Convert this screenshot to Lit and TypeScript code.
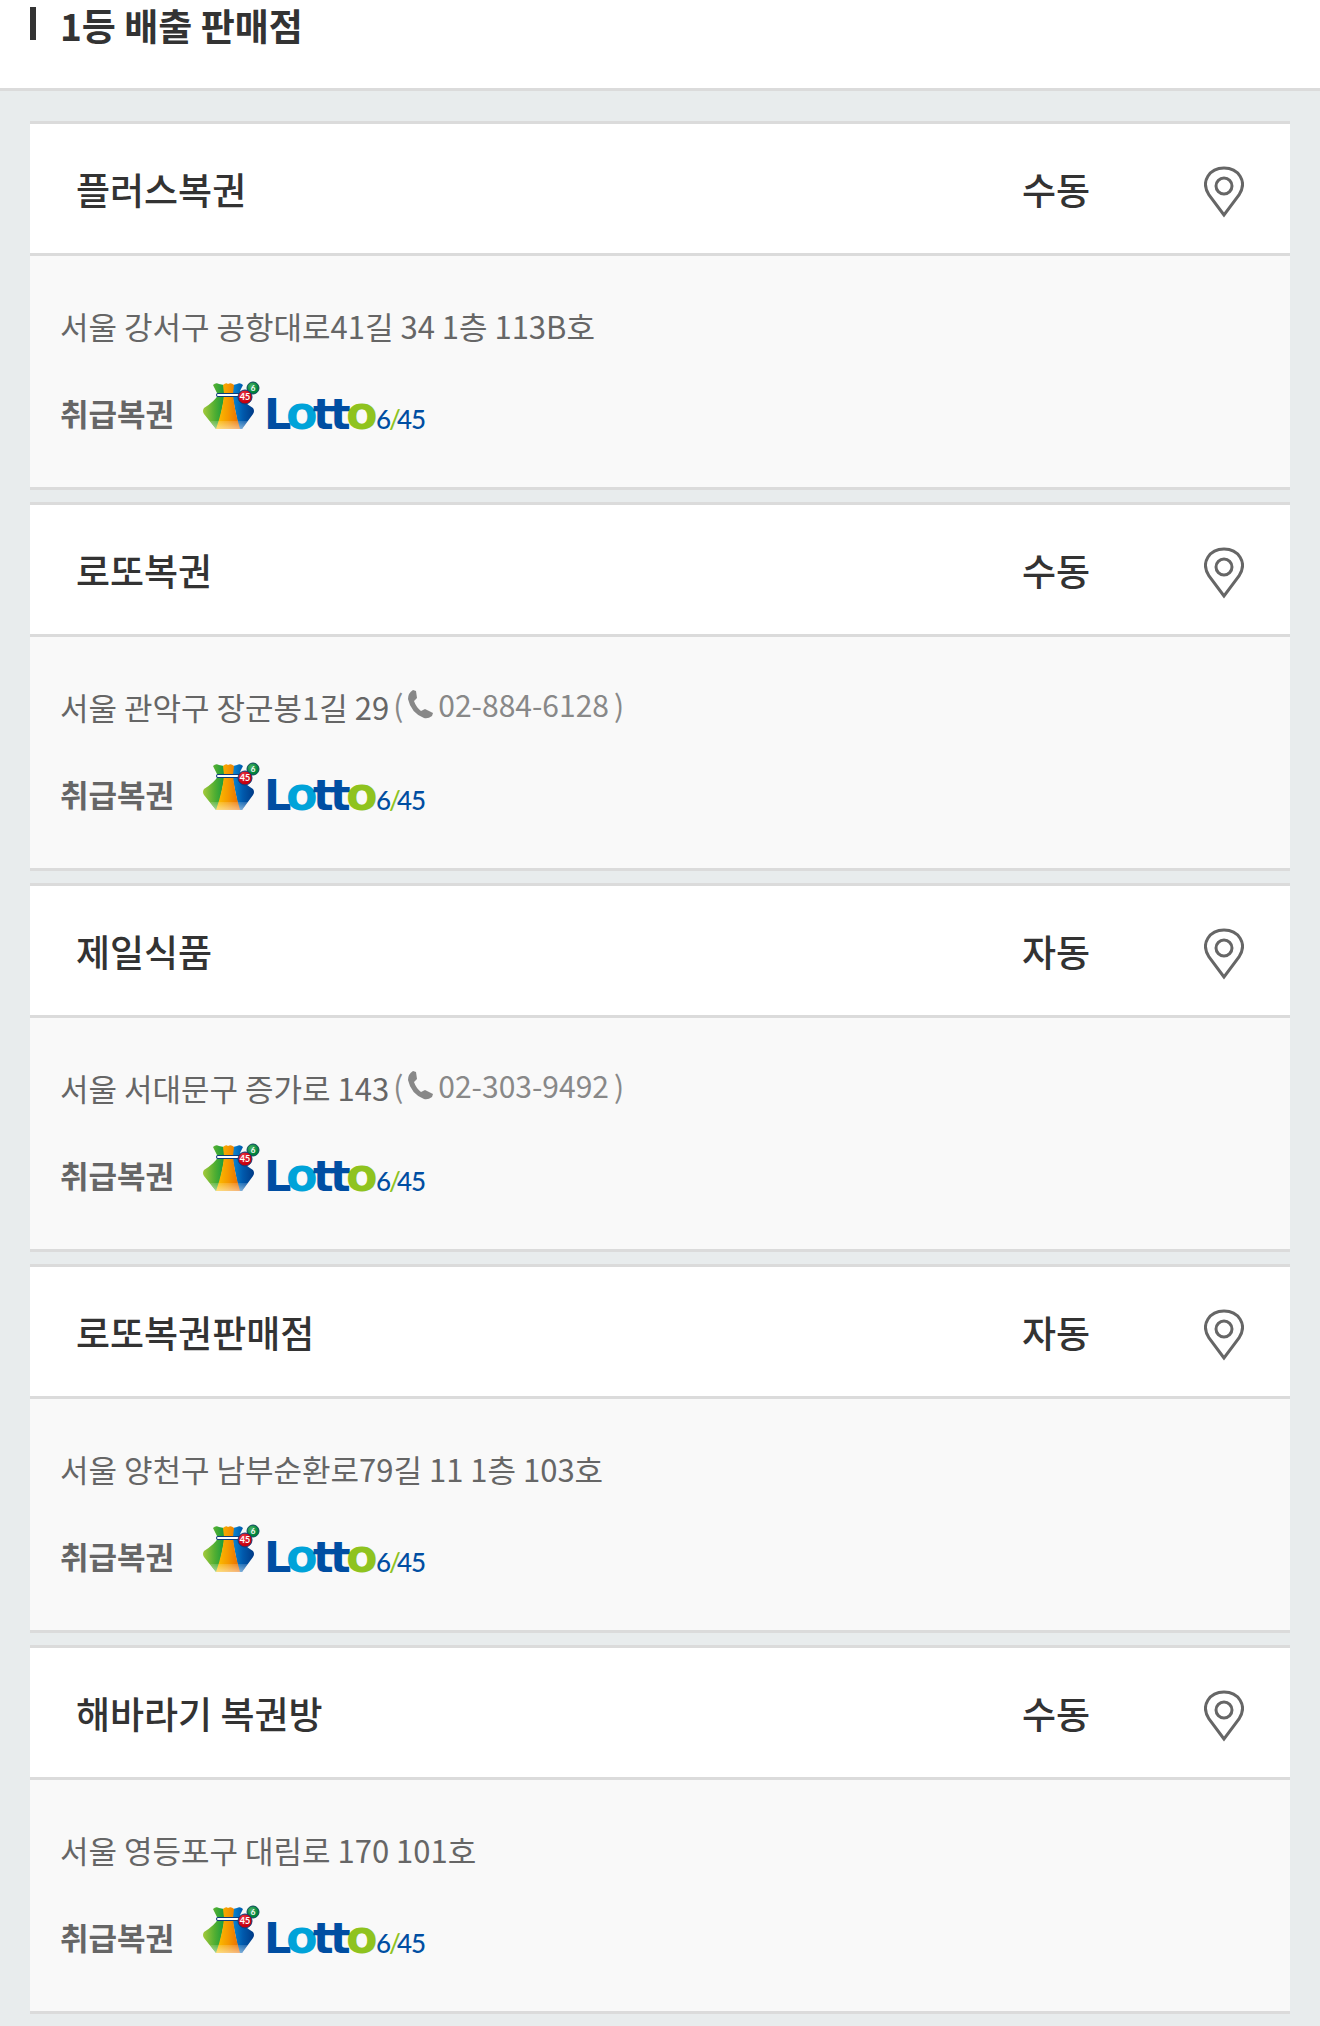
import { LitElement, html, css } from "lit";
import { customElement, property } from "lit/decorators.js";

interface Store {
  name: string;
  method: string;
  address: string;
  phone?: string;
}

const STORES: Store[] = [
  { name: "플러스복권", method: "수동", address: "서울 강서구 공항대로41길 34 1층 113B호" },
  { name: "로또복권", method: "수동", address: "서울 관악구 장군봉1길 29", phone: "02-884-6128" },
  { name: "제일식품", method: "자동", address: "서울 서대문구 증가로 143", phone: "02-303-9492" },
  { name: "로또복권판매점", method: "자동", address: "서울 양천구 남부순환로79길 11 1층 103호" },
  { name: "해바라기 복권방", method: "수동", address: "서울 영등포구 대림로 170 101호" },
];

@customElement("lotto-logo")
export class LottoLogo extends LitElement {
  static styles = css`
    :host { display: block; }
    .logo { display: block; width: 228px; height: 62px; overflow: visible; }
    .word { font-family: "DejaVu Sans", sans-serif; font-weight: 700; }
    .odds { font-family: Lato, sans-serif; font-weight: 500; font-size: 26px; }
    .ball { font-family: Lato, sans-serif; font-weight: 700; fill: #fff; text-anchor: middle; }
    .navy { fill: #004ea2; }
    .sky { fill: #00a3d9; }
    .lime { fill: #8fc31f; }
  `;

  render() {
    return html`<svg class="logo" viewBox="0 0 228 62" role="img" aria-label="Lotto 6/45">
      <defs>
        <linearGradient id="green" x1="0" x2="1">
          <stop offset="0" stop-color="#a4c93a" /><stop offset="0.55" stop-color="#4fae32" /><stop offset="1" stop-color="#139a3e" />
        </linearGradient>
        <linearGradient id="orange" x1="0" x2="1">
          <stop offset="0" stop-color="#fdc300" /><stop offset="0.5" stop-color="#f59a00" /><stop offset="1" stop-color="#ea6a00" />
        </linearGradient>
        <linearGradient id="blue" x1="0" x2="1">
          <stop offset="0" stop-color="#0a8ad6" /><stop offset="0.5" stop-color="#0059ac" /><stop offset="1" stop-color="#003a86" />
        </linearGradient>
        <linearGradient id="shine" x1="0" x2="0" y1="0" y2="1">
          <stop offset="0" stop-color="#fff" stop-opacity="0.15" /><stop offset="1" stop-color="#fff" stop-opacity="0.5" />
        </linearGradient>
        <radialGradient id="red" cx="0.4" cy="0.35"><stop offset="0" stop-color="#f0414b" /><stop offset="1" stop-color="#c8000f" /></radialGradient>
        <radialGradient id="leaf" cx="0.4" cy="0.35"><stop offset="0" stop-color="#4fb568" /><stop offset="1" stop-color="#00833a" /></radialGradient>
      </defs>
      <path fill="url(#green)" d="M10 3Q13 0 16 2L21 3L22 12L15 47H13L1 32Q-1 29 1 26Q12 19 15 13Z" />
      <path fill="url(#blue)" d="M30 3L34 2Q37 0 40 3Q37 8 36 13Q40 20 50 26Q52 29 50 32L39 47H36L29 12Z" />
      <path fill="url(#orange)" d="M20 3Q23 0 25 2Q28 0 31 3L30 12Q31 26 37 47H13Q20 27 21 12Z" />
      <path fill="url(#shine)" d="M7 39H45L39 47H13Z" />
      <path stroke="#0b3c7c" stroke-width="4" stroke-linecap="round" d="M15 13H36" />
      <path stroke="#fff" stroke-width="2" stroke-linecap="round" d="M15 13H36" />
      <circle cx="50" cy="6" r="6" fill="url(#leaf)" stroke="#0b4a5c" stroke-width="1" />
      <circle cx="42" cy="15" r="7" fill="url(#red)" stroke="#0b3c7c" stroke-width="1" />
      <text class="ball" x="50" y="9" font-size="8">6</text>
      <text class="ball" x="42" y="18" font-size="9">45</text>
      <text class="word navy" x="61" y="47" font-size="43">L</text>
      <text class="word sky" x="83" y="47" font-size="46">o</text>
      <text class="word navy" x="110 127" y="47" font-size="43">tt</text>
      <text class="word lime" x="143" y="47" font-size="46">o</text>
      <text class="odds" x="173 186 194 208" y="47"><tspan class="navy">6</tspan><tspan class="lime">/</tspan><tspan class="navy">45</tspan></text>
    </svg>`;
  }
}

@customElement("store-card")
export class StoreCard extends LitElement {
  @property({ attribute: false }) store!: Store;

  static styles = css`
    :host { display: block; border-top: 3px solid #dbdbdb; border-bottom: 3px solid #dbdbdb; background: #f9f9f9; }
    .head { display: flex; align-items: center; height: 129px; padding: 0 30px 0 46px; background: #fff; border-bottom: 3px solid #dbdbdb; }
    .name, .method { margin: 0; font-size: 37px; line-height: 54px; font-weight: 500; color: #333; }
    .name { flex: 1; }
    .method { width: 166px; }
    .map { display: flex; justify-content: center; width: 72px; padding: 0; border: 0; background: none; cursor: pointer; }
    .pin { width: 40px; height: 58px; fill: none; stroke: #666; stroke-width: 3; }
    .body { display: flex; flex-direction: column; gap: 33px; padding: 47px 30px 43px; }
    .address { display: flex; align-items: flex-start; gap: 4px; margin: 0; font-size: 31px; line-height: 46px; color: #666; }
    .tel { display: flex; align-items: center; gap: 5px; margin-top: -3px; font-size: 30px; color: #888; }
    .call { display: flex; align-items: center; gap: 5px; color: inherit; text-decoration: none; }
    .phone { width: 25px; height: 29px; fill: #888; }
    .games { display: flex; align-items: center; gap: 29px; }
    .label { font-size: 31px; line-height: 46px; font-weight: 700; color: #666; }
  `;

  render() {
    const { name, method, address, phone } = this.store;
    return html`
      <div class="head">
        <h3 class="name">${name}</h3>
        <p class="method">${method}</p>
        <button class="map" type="button" aria-label="${name} 지도">
          <svg class="pin" viewBox="0 -6 40 58" aria-hidden="true">
            <path d="M20 49L5 29C-4 15 6 2 20 2S44 15 35 29Z" />
            <circle cx="20" cy="20" r="8" />
          </svg>
        </button>
      </div>
      <div class="body">
        <p class="address">
          <span>${address}</span>
          ${phone
            ? html`<span class="tel">(<a class="call" href="tel:${phone}">
                <svg class="phone" viewBox="0 0 25 29" aria-hidden="true">
                  <path d="M5 0L8 1L9 8L6 11Q8 17 13 21L17 19L25 23L24 26Q20 29 16 28Q3 23 0 9Q0 3 5 0Z" /></svg
                >${phone}</a>)</span>`
            : ""}
        </p>
        <div class="games">
          <span class="label">취급복권</span>
          <lotto-logo></lotto-logo>
        </div>
      </div>
    `;
  }
}

@customElement("app-root")
export class AppRoot extends LitElement {
  static styles = css`
    :host { display: block; min-height: 100vh; background: #e8eced; font-family: "Noto Sans CJK KR", "Noto Sans", sans-serif; }
    .top { display: flex; gap: 24px; padding: 0 30px 38px; background: #fff; border-bottom: 3px solid #dbdbdb; }
    .bar { width: 6px; height: 33px; margin-top: 7px; background: #333; }
    .title { margin: 0; font-size: 37px; line-height: 50px; font-weight: 700; color: #333; }
    .list { display: flex; flex-direction: column; gap: 12px; margin: 0; padding: 30px 30px 12px; list-style: none; }
  `;

  render() {
    return html`
      <header class="top">
        <span class="bar"></span>
        <h2 class="title">1등 배출 판매점</h2>
      </header>
      <ul class="list">
        ${STORES.map((s) => html`<li><store-card .store=${s}></store-card></li>`)}
      </ul>
    `;
  }
}
